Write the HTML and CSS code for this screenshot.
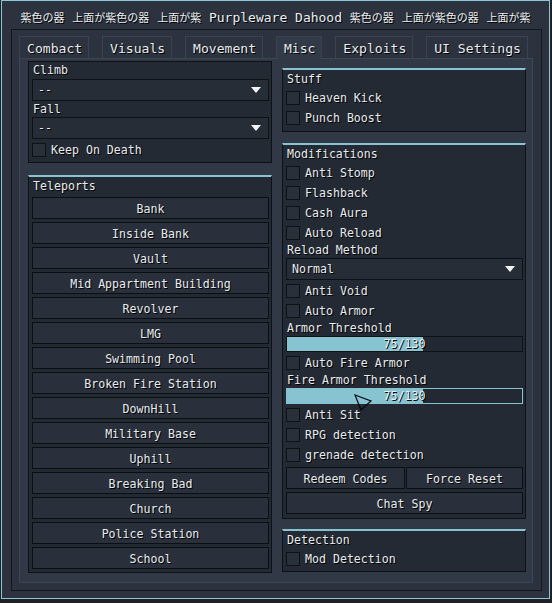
FILE: index.html
```html
<!DOCTYPE html>
<html>
<head>
<meta charset="utf-8">
<link rel="stylesheet" href="styles.css">
</head>
<body>
<div class="window">
  <div class="title"><span class="cjk">紫色の器</span> <span class="cjk">上面が紫色の器</span> <span class="cjk">上面が紫</span> Purpleware Dahood <span class="cjk">紫色の器</span> <span class="cjk">上面が紫色の器</span> <span class="cjk">上面が紫</span></div>
  <div class="frame">
    <div class="tabs">
      <div class="tab">Combact</div>
      <div class="tab">Visuals</div>
      <div class="tab">Movement</div>
      <div class="tab active">Misc</div>
      <div class="tab">Exploits</div>
      <div class="tab">UI Settings</div>
    </div>
    <div class="panel">
      <div class="col col-left">
        <div class="box box-plain">
          <div class="label label-first">Climb</div>
          <div class="dropdown"><span>--</span><svg class="arrow" width="10" height="6" viewBox="0 0 10 6"><polygon points="0,0 10,0 5,6" fill="#f2f2f2"/></svg></div>
          <div class="label">Fall</div>
          <div class="dropdown"><span>--</span><svg class="arrow" width="10" height="6" viewBox="0 0 10 6"><polygon points="0,0 10,0 5,6" fill="#f2f2f2"/></svg></div>
          <div class="check check-gap"><span class="cb"></span>Keep On Death</div>
        </div>
        <div class="box titled box-tp">
          <div class="heading">Teleports</div>
          <div class="buttons">
            <div class="btn">Bank</div>
            <div class="btn">Inside Bank</div>
            <div class="btn">Vault</div>
            <div class="btn">Mid Appartment Building</div>
            <div class="btn">Revolver</div>
            <div class="btn">LMG</div>
            <div class="btn">Swimming Pool</div>
            <div class="btn">Broken Fire Station</div>
            <div class="btn">DownHill</div>
            <div class="btn">Military Base</div>
            <div class="btn">Uphill</div>
            <div class="btn">Breaking Bad</div>
            <div class="btn">Church</div>
            <div class="btn">Police Station</div>
            <div class="btn">School</div>
          </div>
        </div>
      </div>
      <div class="col col-right">
        <div class="box titled">
          <div class="heading">Stuff</div>
          <div class="check"><span class="cb"></span>Heaven Kick</div>
          <div class="check"><span class="cb"></span>Punch Boost</div>
        </div>
        <div class="box titled box-mods">
          <div class="heading">Modifications</div>
          <div class="check"><span class="cb"></span>Anti Stomp</div>
          <div class="check"><span class="cb"></span>Flashback</div>
          <div class="check"><span class="cb"></span>Cash Aura</div>
          <div class="check"><span class="cb"></span>Auto Reload</div>
          <div class="label label-r">Reload Method</div>
          <div class="dropdown dd-gap"><span>Normal</span><svg class="arrow" width="10" height="6" viewBox="0 0 10 6"><polygon points="0,0 10,0 5,6" fill="#f2f2f2"/></svg></div>
          <div class="check"><span class="cb"></span>Anti Void</div>
          <div class="check"><span class="cb"></span>Auto Armor</div>
          <div class="label label-r">Armor Threshold</div>
          <div class="slider"><div class="fill" style="width:57.7%"></div><span class="val">75/130</span></div>
          <div class="check"><span class="cb"></span>Auto Fire Armor</div>
          <div class="label label-r">Fire Armor Threshold</div>
          <div class="slider hover"><div class="fill" style="width:57.7%"></div><span class="val">75/130</span></div>
          <div class="check"><span class="cb"></span>Anti Sit</div>
          <div class="check"><span class="cb"></span>RPG detection</div>
          <div class="check"><span class="cb"></span>grenade detection</div>
          <div class="btn-row">
            <div class="btn">Redeem Codes</div>
            <div class="btn">Force Reset</div>
          </div>
          <div class="btn chat">Chat Spy</div>
        </div>
        <div class="box titled box-det">
          <div class="heading">Detection</div>
          <div class="check"><span class="cb"></span>Mod Detection</div>
        </div>
      </div>
    </div>
  </div>
</div>
<svg class="cursor" width="20" height="20" viewBox="0 0 20 20"><polygon points="1,1 17,7 7,16" fill="none" stroke="#050608" stroke-width="1.2"/></svg>
</body>
</html>
```

FILE: styles.css
```css
html, body {
  margin: 0;
  padding: 0;
}
body {
  background: #1f2125;
  width: 552px;
  height: 603px;
  overflow: hidden;
  position: relative;
  font-family: "DejaVu Sans Mono", "Liberation Mono", monospace;
  font-size: 11.6px;
  color: #e9ecef;
  text-shadow: 1px 1px 0 #000;
}
.window {
  margin-left: 1px;
  width: 549px;
  height: 599px;
  box-sizing: border-box;
  border: 1px solid #8cc6d6;
  background: #2c333e;
  display: flex;
  flex-direction: column;
}
.title {
  height: 28px;
  box-sizing: border-box;
  padding-top: 4px;
  line-height: 24px;
  text-align: center;
  white-space: pre;
  font-size: 13px;
  color: #eceff2;
}
.title .cjk {
  font-family: "Noto Sans CJK JP", sans-serif;
  font-size: 11px;
}
.frame {
  flex: 1;
  margin: 0 7px 7px 9px;
  border: 1px solid #14181d;
  padding: 6px 8px 7px 7px;
  display: flex;
  flex-direction: column;
}
.tabs {
  display: flex;
  justify-content: space-between;
  padding-right: 5px;
  height: 22px;
}
.tab {
  height: 22px;
  box-sizing: border-box;
  padding: 1px 6px 0 7px;
  border: 1px solid #3a4352;
  border-bottom: none;
  display: flex;
  align-items: center;
  background: #2c333e;
  font-size: 13.1px;
}
.tab.active {
  background: #323a47;
  position: relative;
  z-index: 1;
  height: 23px;
  margin-bottom: -1px;
}
.panel {
  flex: 1;
  border: 1px solid #3c4656;
  background: #313946;
  display: flex;
  gap: 10px;
  padding: 0 6px 0 8px;
}
.col {
  width: 244px;
  display: flex;
  flex-direction: column;
}
.col-left { padding-top: 2px; }
.col-right { padding-top: 9px; }
.box {
  border: 1px solid #0e1115;
  background: #242a33;
  padding: 0 2px 2px 3px;
}
.box.titled {
  border-top: 2px solid #87c3d3;
}
.box-tp { margin-top: 12px; padding-bottom: 3px; }
.box-mods { margin-top: 11px; padding-bottom: 4px; }
.box-det { margin-top: 10px; }
.col-right .box:first-child { padding-bottom: 3px; }
.heading {
  height: 18px;
  line-height: 19px;
  padding-left: 1px;
}
.label {
  height: 16px;
  line-height: 16px;
  padding-left: 1px;
}
.label-first { height: 17px; line-height: 17px; }
.label-r { height: 15px; line-height: 15px; }
.dropdown {
  height: 22px;
  box-sizing: border-box;
  border: 1px solid #0e1115;
  background: #272d36;
  display: flex;
  align-items: center;
  justify-content: space-between;
  padding: 0 7px 0 5px;
}
.dd-gap { margin-bottom: 1px; }
.arrow { display: block; }
.check {
  height: 20px;
  display: flex;
  align-items: center;
  gap: 5px;
}
.check-gap { margin-top: 1px; }
.cb {
  width: 14px;
  height: 14px;
  box-sizing: border-box;
  border: 1px solid #0e1115;
  background: #2a3039;
  flex: none;
}
.buttons {
  margin-top: 2px;
  display: flex;
  flex-direction: column;
  gap: 3px;
}
.btn {
  height: 22px;
  box-sizing: border-box;
  border: 1px solid #0c0f12;
  background: #2a303b;
  display: flex;
  align-items: center;
  justify-content: center;
  padding-top: 1px;
}
.btn-row {
  margin-top: 2px;
  display: grid;
  grid-template-columns: 119px 1fr;
  gap: 1px;
}
.chat { margin-top: 3px; }
.slider {
  height: 16px;
  box-sizing: border-box;
  border: 1px solid #0e1115;
  background: #232932;
  position: relative;
  margin-bottom: 1px;
}
.slider.hover { border-color: #86c2d2; }
.fill {
  height: 100%;
  background: #87c3d1;
}
.val {
  position: absolute;
  left: 0;
  right: 0;
  top: 0;
  bottom: 0;
  display: flex;
  align-items: center;
  justify-content: center;
  color: #eef1f3;
}
.cursor {
  position: absolute;
  left: 354px;
  top: 394px;
}
```
